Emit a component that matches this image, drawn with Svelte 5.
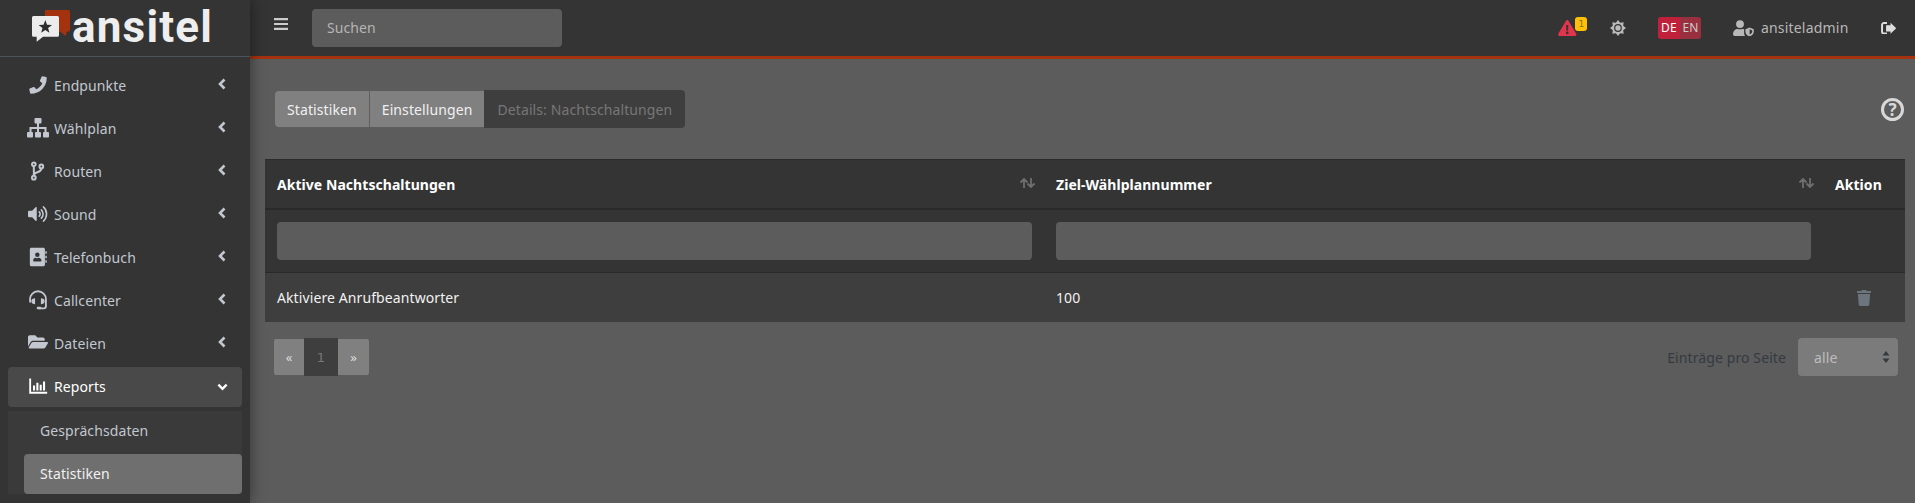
<script>
  const items = ['Endpunkte','Wählplan','Routen','Sound','Telefonbuch','Callcenter','Dateien'];
</script>

{#snippet navIcon(name)}
  <svg class="nicon" class:wide={name==='Wählplan'} viewBox="0 0 24 24" aria-hidden="true">
    {#if name==='Endpunkte'}
      <g transform="translate(1.5 1.5) scale(.041)"><path d="M493.4 24.6l-104-24c-11.3-2.6-22.9 3.3-27.5 13.9l-48 112c-4.2 9.8-1.4 21.3 6.9 28l60.6 49.6c-36 76.7-98.9 140.5-177.2 177.2l-49.6-60.6c-6.8-8.3-18.2-11.1-28-6.9l-112 48C3.9 366.5-2 378.1.6 389.4l24 104C27.1 504.2 36.7 512 48 512c256.1 0 464-207.5 464-464 0-11.2-7.7-20.9-18.6-23.4z"/></g>
    {:else if name==='Wählplan'}
      <rect x="8.5" y="2" width="7" height="5.5" rx="1"/><rect x="1" y="16" width="6" height="5.5" rx="1"/><rect x="9" y="16" width="6" height="5.5" rx="1"/><rect x="17" y="16" width="6" height="5.5" rx="1"/>
      <path d="M11 7h2v4h7.500v5h-2v-3H13v3h-2v-3H5.500v3h-2v-5H11z"/>
    {:else if name==='Routen'}
      <g fill="none" stroke="currentColor" stroke-width="2.400"><circle cx="7" cy="4" r="2.200"/><circle cx="7" cy="20" r="2.200"/><circle cx="16" cy="6.500" r="2.200"/><path d="M7 7v10M16 9c0 6-9 3-9 8"/></g>
    {:else if name==='Sound'}
      <path d="M10.500 4.500v15c0 .8-.9 1.200-1.500.6L5 16H1.500C.7 16 0 15.300 0 14.500v-5C0 8.700.7 8 1.500 8H5l4-4.100c.6-.6 1.500-.2 1.500.6z"/>
      <g fill="none" stroke="currentColor" stroke-width="1.900" stroke-linecap="round"><path d="M13.500 9.500a3.500 3.500 0 0 1 0 5M16 7a7 7 0 0 1 0 10M18.500 3.500a11.500 11.500 0 0 1 0 17"/></g>
    {:else if name==='Telefonbuch'}
      <path fill-rule="evenodd" d="M4 1h14.500c1 0 1.800.8 1.800 1.800v18.400c0 1-.8 1.800-1.800 1.800H4c-1 0-1.800-.8-1.800-1.800V2.800C2.200 1.800 3 1 4 1zM11.200 6.500a2.700 2.700 0 1 0 0 5.400 2.700 2.700 0 0 0 0-5.400zM6.200 16.500c0 .5.400.9.900.9h8.200c.5 0 .9-.4.900-.9 0-1.800-1.500-3.500-3-3.500-.8 0-1.300.4-2.200.4s-1.400-.4-2.200-.4c-1.500 0-2.600 1.700-2.600 3.500z"/>
      <path d="M20.800 5h1.700v3.200h-1.700zM20.800 10.400h1.700v3.200h-1.700zM20.800 15.800h1.700V19h-1.700z"/>
    {:else if name==='Callcenter'}
      <g fill="none" stroke="currentColor" stroke-width="2.200"><path d="M2.500 15v-4a9.500 9.500 0 0 1 19 0v8.500c0 1.500-1 2.500-2.500 2.500H13"/></g>
      <path d="M8.500 10v7c-2.500 0-4.500-1-4.500-3.500S6 10 8.500 10zM15.500 10v7c2.500 0 4.500-1 4.500-3.500S18 10 15.500 10z"/><rect x="10.500" y="20" width="5.500" height="3.200" rx="1.200"/>
    {:else}
      <g transform="scale(.0417)"><path d="M572.694 292.093L500.27 416.248A63.997 63.997 0 0 1 444.989 448H45.025c-18.523 0-30.064-20.093-20.731-36.093l72.424-124.155A64 64 0 0 1 152 256h399.964c18.523 0 30.064 20.093 20.73 36.093zM152 224h328v-48c0-26.51-21.49-48-48-48H272l-64-64H48C21.49 64 0 85.49 0 112v278.046l69.077-118.418C86.214 242.25 117.989 224 152 224z"/></g>
    {/if}
  </svg>
{/snippet}

{#snippet sortIcon()}
  <svg class="sort" viewBox="0 0 17 12" aria-hidden="true"><path d="M5 11V2M1.500 5.500 5 2l3.500 3.500M12 1v9M8.500 6.500 12 10l3.500-3.500"/></svg>
{/snippet}

<div class="app">
  <aside class="sidebar">
    <div class="brand">
      <svg class="logo" viewBox="0 0 38 32" aria-hidden="true">
        <path class="lr" d="M13 0h23.500A1.500 1.500 0 0 1 38 1.500V20a1.500 1.500 0 0 1-1.500 1.500H35L33.500 26 28 21.500H13z"/>
        <path class="lw" d="M1.500 6H25.500A1.500 1.500 0 0 1 27 7.500V25.200a1.500 1.500 0 0 1-1.500 1.500H11L4.700 31.800V26.700H1.500A1.500 1.500 0 0 1 0 25.200V7.500A1.500 1.500 0 0 1 1.500 6z"/>
        <path class="ls" d="M13.300 10l1.700 4.700 5 .2-3.900 3.100 1.300 4.800-4.100-2.800-4.100 2.800 1.300-4.800-3.900-3.100 5-.2z"/>
      </svg>
      <span class="wordmark">ansitel</span>
    </div>
    <nav class="nav">
      {#each items as item}
        <div class="item">
          <span class="iconbox">{@render navIcon(item)}</span>
          <span class="label">{item}</span>
          <svg class="chev" viewBox="0 0 8 12" aria-hidden="true"><path d="M6.500 1.500 2 6l4.500 4.500"/></svg>
        </div>
      {/each}
      <div class="item open">
        <span class="iconbox">
          <svg class="nicon" viewBox="0 0 24 24" aria-hidden="true"><path d="M1.500 3h2.200v16H23v2.200H1.500z"/><path d="M6 11.500h2.500v6H6zM10 8h2.500v9.500H10zM14 10.500h2.500v7H14zM18 6.500h2.500v11H18z"/></svg>
        </span>
        <span class="label">Reports</span>
        <svg class="chevd" viewBox="0 0 12 8" aria-hidden="true"><path d="M1.500 1.500 6 6l4.500-4.500"/></svg>
      </div>
      <div class="sub">
        <div class="subitem">Gesprächsdaten</div>
        <div class="subitem active">Statistiken</div>
      </div>
    </nav>
  </aside>

  <div class="main">
    <header class="topbar">
      <svg class="burger" viewBox="0 0 14 12" aria-hidden="true"><path d="M0 0h14v2.200H0zM0 4.900h14v2.200H0zM0 9.800h14V12H0z"/></svg>
      <div class="search">Suchen</div>
      <div class="spacer"></div>
      <div class="alert">
        <svg viewBox="0 0 20 18" preserveAspectRatio="none" aria-hidden="true"><path fill-rule="evenodd" d="M10 0c.7 0 1.200.4 1.500 1l8.200 14.500c.6 1.100-.2 2.500-1.500 2.500H1.800C.5 18-.3 16.600.3 15.500L8.500 1C8.800.4 9.300 0 10 0zM8.800 5.500l.3 6.500h1.800l.3-6.500zM10 13a1.500 1.500 0 1 0 0 3 1.500 1.500 0 0 0 0-3z"/></svg>
        <span class="badge">1</span>
      </div>
      <svg class="sun" viewBox="0 0 16 16" aria-hidden="true"><path d="M8 0 10.140 2.830 13.660 2.340 13.170 5.860 16 8 13.170 10.140 13.660 13.660 10.140 13.170 8 16 5.860 13.170 2.340 13.660 2.830 10.140 0 8 2.830 5.860 2.340 2.340 5.860 2.830z"/><circle class="suni" cx="8" cy="8" r="3.900"/><circle cx="8" cy="8" r="2.700"/></svg>
      <div class="lang"><span class="de">DE</span><span class="en">EN</span></div>
      <div class="user">
        <svg viewBox="0 0 24 18" aria-hidden="true"><circle cx="8" cy="4.500" r="4.500"/><path d="M0 16c0-3.500 2.500-6 5-6 1 0 1.800.5 3 .5s2-.5 3-.5c.6 0 1.200.1 1.700.4V15c0 1 .4 2 1 3H2c-1.100 0-2-.9-2-2z"/><path fill-rule="evenodd" d="M19 8.500l4.800 2v2.500c0 3-2.200 5-4.800 5.500-2.600-.5-4.800-2.500-4.800-5.500v-2.500zM19 10.500v6c1.500-.4 3-1.800 3-3.700v-1z"/></svg>
        <span>ansiteladmin</span>
      </div>
      <svg class="out" viewBox="0 0 17 14" aria-hidden="true"><path d="M10.500 3.500V.8l6.400 6.200-6.400 6.200v-2.700H5.500v-7z"/><path d="M6.500 1.200H3a2 2 0 0 0-2 2v7.600a2 2 0 0 0 2 2h3.500" fill="none" stroke="currentColor" stroke-width="2.200"/></svg>
    </header>

    <main class="content">
      <div class="tabrow">
        <div class="tabs">
          <div class="tab first">Statistiken</div>
          <div class="tab second">Einstellungen</div>
          <div class="tab current">Details: Nachtschaltungen</div>
        </div>
        <div class="help">?</div>
      </div>

      <div class="table">
        <div class="row head">
          <div class="cell c1"><b>Aktive Nachtschaltungen</b>{@render sortIcon()}</div>
          <div class="cell c2"><b>Ziel-Wählplannummer</b>{@render sortIcon()}</div>
          <div class="cell c3 left"><b>Aktion</b></div>
        </div>
        <div class="row filter">
          <div class="cell c1"><div class="finput"></div></div>
          <div class="cell c2"><div class="finput"></div></div>
          <div class="cell c3"></div>
        </div>
        <div class="row data">
          <div class="cell c1">Aktiviere Anrufbeantworter</div>
          <div class="cell c2">100</div>
          <div class="cell c3">
            <svg class="trash" viewBox="0 0 448 512" aria-hidden="true"><path d="M432 32H312l-9.400-18.700A24 24 0 0 0 281.100 0H166.800a23.700 23.700 0 0 0-21.400 13.300L136 32H16A16 16 0 0 0 0 48v32a16 16 0 0 0 16 16h416a16 16 0 0 0 16-16V48a16 16 0 0 0-16-16zM53.200 467a48 48 0 0 0 47.900 45h245.800a48 48 0 0 0 47.900-45L416 128H32z"/></svg>
          </div>
        </div>
      </div>

      <div class="footer">
        <div class="pager"><span class="pg">«</span><span class="pg cur">1</span><span class="pg last">»</span></div>
        <div class="perpage">
          <span>Einträge pro Seite</span>
          <div class="select">alle<svg viewBox="0 0 8 12" aria-hidden="true"><path d="M4 0l3.500 4.500h-7zM4 12 .5 7.500h7z"/></svg></div>
        </div>
      </div>
    </main>
  </div>
</div>

<style>
  :global(body) { margin: 0; background: #5c5c5c; }
  .app { display: flex; width: 1915px; height: 503px; overflow: hidden; font-family: "Noto Sans", "Open Sans", sans-serif; font-size: 14px; letter-spacing: .1px; color: #fff; }
  .sidebar { width: 250px; flex: none; background: #343434; box-shadow: 0 0 14px rgba(0,0,0,.45); position: relative; z-index: 2; }
  .brand { height: 56px; border-bottom: 1px solid #4b545c; display: flex; align-items: flex-start; padding-left: 32px; gap: 2px; }
  .logo { width: 38px; height: 32px; margin-top: 10px; flex: none; }
  .lr { fill: #a5320f; }
  .lw { fill: #ececec; }
  .ls { fill: #2b2b2b; }
  .wordmark { font-family: Roboto, sans-serif; font-weight: 700; font-size: 44px; line-height: 55px; letter-spacing: 1.200px; color: #eee; }
  .nav { padding: 9px 8px 0; display: flex; flex-direction: column; }
  .item { height: 40px; margin-bottom: 3px; display: flex; align-items: center; color: #c2c7d0; padding-left: 17px; padding-right: 14px; border-radius: 4px; }
  .item.open { background: #494949; color: #fff; margin-bottom: 4px; }
  .iconbox { width: 26px; display: flex; justify-content: center; }
  .nicon { width: 20px; height: 20px; fill: currentColor; display: block; margin-top: -3px; flex: none; }
  .nicon.wide { width: 24px; height: 24px; }
  .label { margin-left: 3px; flex: 1; padding-bottom: 2px; }
  .chev, .chevd { fill: none; stroke: currentColor; stroke-width: 2.600; }
  .chev { width: 8px; height: 12px; margin-right: 2px; margin-top: -4px; }
  .chevd { width: 11px; height: 8px; margin-top: -1px; }
  .sub { background: #3a3a3a; display: flex; flex-direction: column; height: 83px; }
  .subitem { height: 40px; flex: none; box-sizing: border-box; display: flex; align-items: center; color: #c2c7d0; padding: 0 0 2px 32px; margin-bottom: 3px; }
  .subitem.active { background: #6f6f6f; color: #f0f0f0; margin-left: 16px; padding-left: 16px; border-radius: 4px; margin-bottom: 0; }

  .main { flex: 1; min-width: 0; display: flex; flex-direction: column; }
  .topbar { height: 56px; flex: none; background: #343434; border-bottom: 3px solid #a5320f; display: flex; align-items: center; padding-left: 24px; color: #bbb; }
  .burger { width: 14px; height: 12px; fill: #ccc; margin-top: -8px; margin-right: 24px; flex: none; }
  .search { width: 250px; height: 38px; box-sizing: border-box; background: #5c5c5c; border-radius: 4px; color: #b5b5b5; display: flex; align-items: center; padding: 0 0 2px 15px; }
  .spacer { flex: 1; }
  .alert { position: relative; width: 18.500px; height: 16px; margin-right: 33px; }
  .alert svg { width: 18.500px; height: 16px; fill: #e0354c; display: block; }
  .badge { position: absolute; left: 17px; top: -3px; width: 12px; height: 14px; background: #ffc107; border-radius: 3px; font-family: "DejaVu Sans", sans-serif; font-size: 9px; line-height: 14px; text-align: center; color: #86722a; }
  .sun { width: 16px; height: 16px; fill: #bbb; margin-right: 32px; flex: none; }
  .suni { fill: #343434; }
  .lang { display: flex; height: 22px; border-radius: 3px; overflow: hidden; font-size: 12px; line-height: 22px; margin-right: 32px; }
  .de { width: 22px; background: #c0203a; color: #fff; text-align: center; }
  .en { width: 21px; background: #98303f; color: #ccc; text-align: center; }
  .user { display: flex; align-items: center; gap: 7px; color: #b8b8b8; margin-right: 32px; letter-spacing: .2px; }
  .user span { margin-bottom: 1px; }
  .user svg { width: 21px; height: 16px; fill: #b8b8b8; }
  .out { width: 15.500px; height: 12.500px; fill: #ddd; color: #ddd; margin-right: 19px; flex: none; }

  .content { flex: 1; padding: 31px 10px 0 15px; }
  .tabrow { display: flex; align-items: center; justify-content: space-between; padding-left: 10px; height: 38px; }
  .tabs { display: flex; align-items: stretch; height: 38px; border-radius: 4px; }
  .tab { display: flex; align-items: center; white-space: nowrap; padding-bottom: 1px; }
  .first { background: #808080; color: #f0f0f0; margin: 1px 0; border-radius: 4px 0 0 4px; padding: 0 12px; border-right: 1px solid #5e5e5e; }
  .second { background: #808080; color: #f0f0f0; margin: 1px 0; padding: 0 12px; }
  .current { background: #3e3e3e; color: #777; border-radius: 0 4px 4px 0; padding: 0 13px; }
  .help { width: 17px; height: 17px; border: 3px solid #d8d8d8; border-radius: 50%; color: #d8d8d8; font-weight: 700; font-size: 17px; line-height: 17px; text-align: center; margin-right: 1px; flex: none; }

  .table { margin-top: 31px; }
  .row { display: grid; grid-template-columns: 779px 779px 1fr; }
  .cell { padding: 0 12px; display: flex; align-items: center; justify-content: space-between; box-sizing: border-box; }
  .head { background: #343434; height: 51px; border-top: 1px solid #2a2a2a; border-bottom: 2px solid #2a2a2a; box-sizing: border-box; }
  .head b { font-weight: 700; font-size: 14px; letter-spacing: .05px; }
  .sort { width: 17px; height: 12px; fill: none; stroke: #6f6f6f; stroke-width: 1.800; margin-right: -4px; margin-top: -3px; flex: none; }
  .filter { background: #343434; height: 63px; border-bottom: 1px solid #2a2a2a; box-sizing: border-box; }
  .finput { flex: 1; height: 38px; background: #5c5c5c; border-radius: 4px; }
  .data { background: #3e3e3e; height: 49px; color: #f2f2f2; }
  .c3 { justify-content: center; }
  .c3.left { justify-content: flex-start; }
  .trash { width: 14px; height: 16px; fill: #6c757d; }

  .footer { display: flex; justify-content: space-between; align-items: flex-start; padding: 16px 7px 0 9px; }
  .pager { display: flex; height: 38px; border-radius: 4px; overflow: hidden; }
  .pg { width: 30px; background: #808080; color: #ddd; display: flex; align-items: center; justify-content: center; font-size: 13px; margin: 1px 0; }
  .pg.last { width: 31px; }
  .pg.cur { width: 34px; background: #3e3e3e; color: #777; margin: 0; font-family: "DejaVu Sans", sans-serif; font-size: 13px; }
  .perpage { display: flex; align-items: center; gap: 12px; color: #343a40; }
  .select { width: 100px; height: 38px; box-sizing: border-box; background: #7b7b7b; border-radius: 4px; color: #bdbdbd; display: flex; align-items: center; justify-content: space-between; padding: 0 8px 0 16px; }
  .select svg { width: 8px; height: 12px; fill: #343a40; }
</style>
